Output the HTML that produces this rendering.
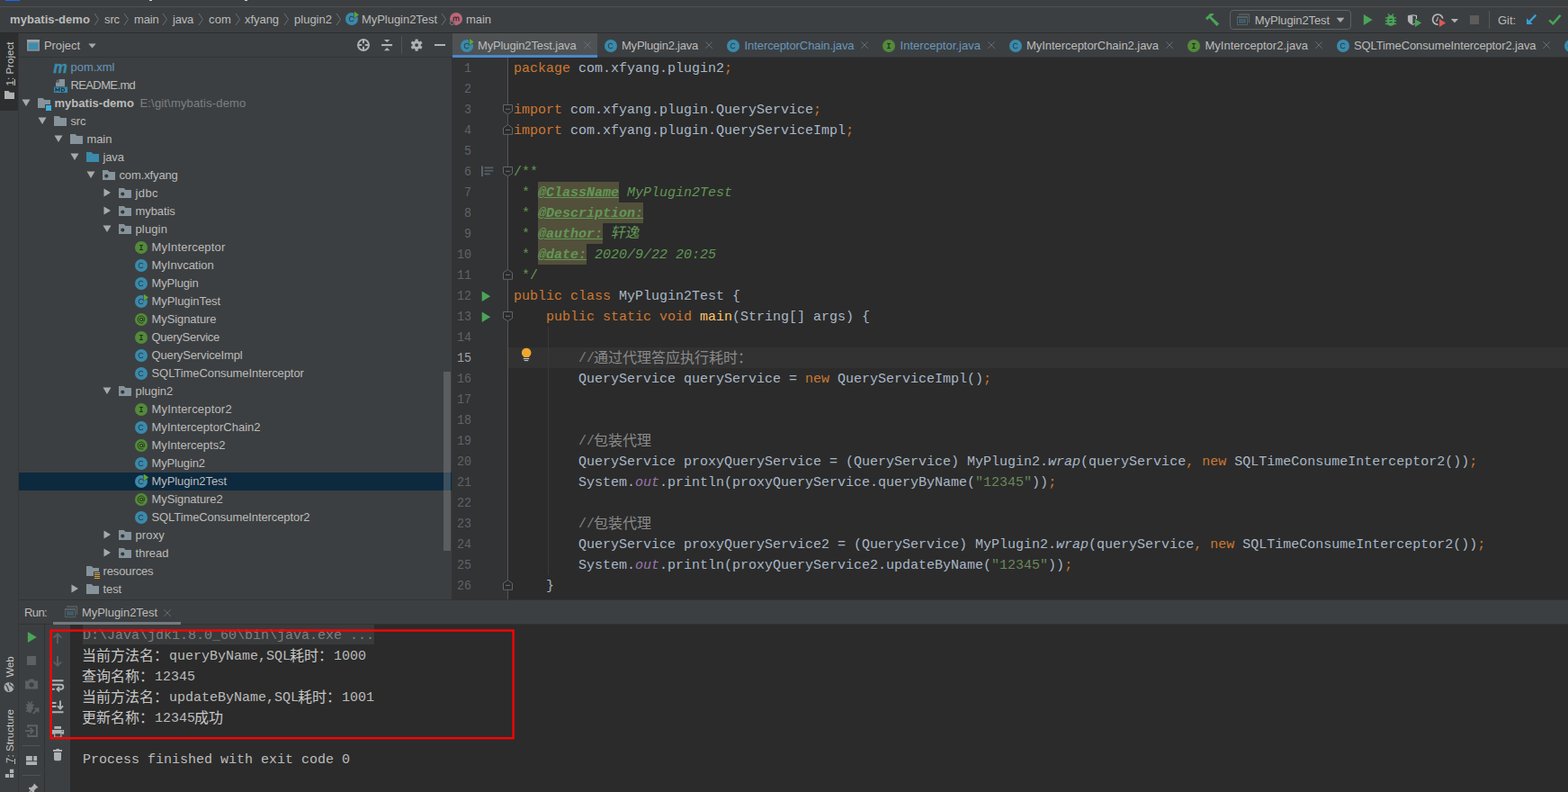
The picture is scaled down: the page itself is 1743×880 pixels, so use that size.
<!DOCTYPE html>
<html><head><meta charset="utf-8"><title>mybatis-demo</title>
<style>
html,body{margin:0;padding:0;background:#3c3f41;}
body{width:1743px;height:880px;overflow:hidden;position:relative;font-family:"Liberation Sans", sans-serif;font-size:13px;color:#bbbbbb;}
#root{position:absolute;left:0;top:0;width:1743px;height:880px;overflow:hidden;background:#3c3f41;}
#root>div,#root>span,#root>svg{position:absolute;}
.t{white-space:pre;}
.c{position:absolute;white-space:pre;font-family:"Liberation Mono", monospace;font-size:15px;line-height:23px;height:23px;color:#a9b7c6;margin-top:1px;}
.c i{font-style:italic;}
.k{color:#cc7832;} .s{color:#6a8759;} .d{color:#629755;} .g{color:#808080;} .p{color:#9876aa;font-style:italic;} .m{color:#ffc66d;}
.tag{color:#629755;font-weight:bold;font-style:italic;text-decoration:underline;background:#52503a;}
.cj{font-family:"Liberation Mono", "Noto Sans CJK SC", monospace;font-size:16px;}
</style></head>
<body><div id="root">
<svg width="0" height="0" style="position:absolute"><defs>

<symbol id="folder" viewBox="0 0 16 16"><path fill="#87939a" d="M1 2H6.6L8.6 4H15V13H1Z"/></symbol>
<symbol id="srcfolder" viewBox="0 0 16 16"><path fill="#3b8aab" d="M1 2H6.6L8.6 4H15V13H1Z"/></symbol>
<symbol id="pkg" viewBox="0 0 16 16"><path fill="#87939a" d="M1 2H6.6L8.6 4H15V13H1Z"/><circle cx="5.300" cy="8.600" r="2.100" fill="#33383b"/></symbol>
<symbol id="module" viewBox="0 0 16 16"><path fill="#87939a" d="M1 2H6.6L8.6 4H15V9H9V13H1Z"/><rect x="10" y="10" width="6" height="6" fill="#3cb0e0"/></symbol>
<symbol id="resfolder" viewBox="0 0 16 16"><path fill="#87939a" d="M1 2H6.6L8.6 4H15V8H9V13H1Z"/><path stroke="#d9a343" stroke-width="1" d="M10 9.500h6M10 11.500h6M10 13.500h6M10 15.500h6"/></symbol>
<symbol id="cls" viewBox="0 0 16 16"><circle cx="8" cy="8" r="7" fill="#3b8aab"/><path d="M10 6.500A2.600 2.700 0 1 0 10 9.500" fill="none" stroke="#294553" stroke-width="1.050"/></symbol>
<symbol id="clsrun" viewBox="0 0 16 16"><circle cx="8" cy="8" r="7" fill="#3b8aab"/><path d="M10 6.500A2.600 2.700 0 1 0 10 9.500" fill="none" stroke="#294553" stroke-width="1.050"/><path d="M10.300 -1V8.100L17 3.500Z" fill="#3c3f41"/><path d="M10.900 -0.200V7.200L16.100 3.500Z" fill="#5aa83a"/></symbol>
<symbol id="iface" viewBox="0 0 16 16"><circle cx="8" cy="8" r="7" fill="#538a3b"/><path d="M6.1 5.500h3.800M8 5.500v5M6.1 10.500h3.800" fill="none" stroke="#1f2d17" stroke-width="1.100"/></symbol>
<symbol id="anno" viewBox="0 0 16 16"><circle cx="8" cy="8" r="7" fill="#538a3b"/><circle cx="8" cy="8" r="1.700" fill="none" stroke="#233319" stroke-width="0.900"/><path d="M9.8 6.2V9.2Q10.2 10.3 11.2 9.6Q12.3 7.6 11.2 5.6Q9.6 3.6 7 4.1Q4.2 5 4.1 8Q4.2 11 7 11.9Q8.8 12.3 10.3 11.5" fill="none" stroke="#233319" stroke-width="0.850"/></symbol>
<symbol id="mvn" viewBox="0 0 16 16"><text x="0.200" y="14.200" font-family="Liberation Sans" font-weight="bold" font-style="italic" font-size="17.500" fill="#3b8aab" stroke="#3b8aab" stroke-width="0.350">m</text></symbol>
<symbol id="md" viewBox="0 -0.900 16 16"><path fill="#87939a" d="M6 0H13V8H3V3Z"/><path fill="#3c3f41" d="M6.6 0V3.6H3V2.6H5.6V0Z"/><rect x="1" y="8.6" width="15" height="6.6" fill="#3b8aab"/><path fill="none" stroke="#1f3440" stroke-width="1.1" d="M3 14V10.2L5 12.6L7 10.2V14M9.4 10.2V13.8H10.6Q12.6 13.8 12.6 12T10.6 10.2Z"/></symbol>
<symbol id="ad" viewBox="0 0 10 10"><path fill="#a7a9ab" d="M0.5 1.5H9.5L5 9Z"/></symbol>
<symbol id="ar" viewBox="0 0 10 10"><path fill="#a7a9ab" d="M1.5 0.5V9.5L9 5Z"/></symbol>
<symbol id="x" viewBox="0 0 8 8"><path stroke="#6c7073" stroke-width="0.950" d="M0.300 0.300L7.900 7.900M7.900 0.300L0.300 7.900"/></symbol>
<symbol id="runcfg" viewBox="0 0 16 16"><path d="M3 2H15M14.500 2V11" fill="none" stroke="#596064" stroke-width="1.300"/><rect x="1" y="4" width="12" height="10" fill="#596064"/><rect x="2" y="6.200" width="10" height="6.800" fill="#373a3c"/><rect x="3" y="7" width="8" height="5" fill="#3d5c69"/></symbol>

</defs></svg>
<div style="left:0px;top:0px;width:1743px;height:7px;background:#3c3f41;"></div>
<div style="left:6px;top:0px;width:16px;height:1px;background:#0f6df5;"></div>
<div style="left:166px;top:0px;width:3px;height:1px;background:#d0d0d0;"></div>
<div style="left:272px;top:0px;width:3px;height:1px;background:#d0d0d0;"></div>
<div style="left:0px;top:7px;width:1743px;height:1px;background:#515151;"></div>
<div style="left:0px;top:8px;width:1743px;height:28px;background:#3c3f41;"></div>
<div style="left:0px;top:36px;width:1743px;height:1px;background:#2b2b2b;"></div>
<span id="t1" class="t" style="left:11px;top:12.0px;line-height:20px;font-size:13px;color:#bbbbbb;font-weight:bold;letter-spacing:0.072px;">mybatis-demo</span>
<svg style="left:104px;top:14px;" width="7" height="15" viewBox="0 0 7 15"><path d="M1 1L5.500 7.500L1 14" fill="none" stroke="#6c7073" stroke-width="1"/></svg>
<span id="t2" class="t" style="left:116px;top:12.0px;line-height:20px;font-size:13px;color:#bbbbbb;letter-spacing:-0.115px;">src</span>
<svg style="left:137px;top:14px;" width="7" height="15" viewBox="0 0 7 15"><path d="M1 1L5.500 7.500L1 14" fill="none" stroke="#6c7073" stroke-width="1"/></svg>
<span id="t3" class="t" style="left:149px;top:12.0px;line-height:20px;font-size:13px;color:#bbbbbb;letter-spacing:-0.172px;">main</span>
<svg style="left:180px;top:14px;" width="7" height="15" viewBox="0 0 7 15"><path d="M1 1L5.500 7.500L1 14" fill="none" stroke="#6c7073" stroke-width="1"/></svg>
<span id="t4" class="t" style="left:192px;top:12.0px;line-height:20px;font-size:13px;color:#bbbbbb;letter-spacing:-0.215px;">java</span>
<svg style="left:220px;top:14px;" width="7" height="15" viewBox="0 0 7 15"><path d="M1 1L5.500 7.500L1 14" fill="none" stroke="#6c7073" stroke-width="1"/></svg>
<span id="t5" class="t" style="left:232px;top:12.0px;line-height:20px;font-size:13px;color:#bbbbbb;letter-spacing:0.146px;">com</span>
<svg style="left:261px;top:14px;" width="7" height="15" viewBox="0 0 7 15"><path d="M1 1L5.500 7.500L1 14" fill="none" stroke="#6c7073" stroke-width="1"/></svg>
<span id="t6" class="t" style="left:272px;top:12.0px;line-height:20px;font-size:13px;color:#bbbbbb;letter-spacing:-0.052px;">xfyang</span>
<svg style="left:315px;top:14px;" width="7" height="15" viewBox="0 0 7 15"><path d="M1 1L5.500 7.500L1 14" fill="none" stroke="#6c7073" stroke-width="1"/></svg>
<span id="t7" class="t" style="left:327px;top:12.0px;line-height:20px;font-size:13px;color:#bbbbbb;letter-spacing:0.009px;">plugin2</span>
<svg style="left:373px;top:14px;" width="7" height="15" viewBox="0 0 7 15"><path d="M1 1L5.500 7.500L1 14" fill="none" stroke="#6c7073" stroke-width="1"/></svg>
<svg style="left:383px;top:13px" width="16" height="16"><use href="#clsrun"/></svg>
<span id="t8" class="t" style="left:402px;top:12.0px;line-height:20px;font-size:13px;color:#bbbbbb;letter-spacing:-0.042px;">MyPlugin2Test</span>
<svg style="left:490px;top:14px;" width="7" height="15" viewBox="0 0 7 15"><path d="M1 1L5.500 7.500L1 14" fill="none" stroke="#6c7073" stroke-width="1"/></svg>
<svg style="left:498px;top:13px;" width="18" height="17" viewBox="0 0 18 17"><circle cx="9" cy="7.900" r="7" fill="#b76a7a"/><path d="M6.300 10.400V5.900M6.300 7Q7.200 5.700 8.300 6.100Q9.100 6.400 9.100 7.500V10.400M9.100 7.100Q10 5.700 11.200 6.100Q12 6.400 12 7.500V10.400" fill="none" stroke="#3e2229" stroke-width="1.100"/><path d="M1.400 12.700L4.400 9.700L7.400 12.700L4.400 15.700Z" fill="#3c3f41" stroke="#3c3f41" stroke-width="0.600"/><path d="M2 12.700L4.400 10.300L6.800 12.700L4.400 15.100Z" fill="#3c3f41" stroke="#878d93" stroke-width="0.950"/></svg>
<span id="t9" class="t" style="left:518px;top:12.0px;line-height:20px;font-size:13px;color:#bbbbbb;letter-spacing:-0.047px;">main</span>
<svg style="left:1336px;top:8px" width="407" height="28" viewBox="1336 8 407 28"><path fill="#4aa457" d="M1339.850 20.300L1345.200 15H1349.100L1349.300 15.900L1346.400 18.400L1355.200 26.500L1352.600 28.900L1344.300 20L1342.300 22.200Z"/><rect x="1367.500" y="11.500" width="134" height="21" rx="3.500" fill="none" stroke="#5f6263" stroke-width="1"/><path d="M1377 16H1389M1388.500 16V25" fill="none" stroke="#596064" stroke-width="1.300"/><rect x="1375" y="18" width="12" height="10" fill="#596064"/><rect x="1376" y="20.200" width="10" height="6.800" fill="#373a3c"/><rect x="1377" y="21" width="8" height="5" fill="#3d5c69"/><path d="M1485.600 19.800H1494.400L1490 24.900Z" fill="#a9abad"/><path d="M1515.800 16L1525.700 21.950L1515.800 28.100Z" fill="#4aa457"/><g fill="#4aa457" stroke="none"><path d="M1542 21.500Q1542 17 1546 17T1550 21.500V24.500Q1550 28.800 1546 28.800T1542 24.500Z"/></g><path d="M1543.100 15.300L1544.800 17.800M1548.900 15.300L1547.200 17.800M1539.900 19.900H1552.100M1539.900 23.200H1552.100M1539.900 26.500H1552.100" stroke="#4aa457" stroke-width="1.400" fill="none"/><rect x="1544.300" y="20.900" width="3.400" height="1.200" fill="#3c3f41"/><rect x="1544.300" y="24" width="3.400" height="1.200" fill="#3c3f41"/><path d="M1564.900 17.200L1570.400 16.300V27.900Q1565.500 26 1564.900 22.500Z" fill="#b1b3b5"/><path d="M1570.400 16.800L1574.500 17.500V21M1570.400 27.400Q1572 26.800 1572.600 26" fill="none" stroke="#c4c6c8" stroke-width="1.100"/><path d="M1572.900 21L1580.100 25.400L1572.900 30Z" fill="#4aa457"/><path d="M1598.700 27.200A5.600 5.600 0 1 1 1603.700 20.600" fill="none" stroke="#b4b6b8" stroke-width="1.700"/><path d="M1598.400 18.800Q1598.300 21.800 1596.500 23.800" fill="none" stroke="#b4b6b8" stroke-width="1.100"/><path d="M1600 21L1607.100 25.400L1600 30Z" fill="#db5858"/><path d="M1612.800 21H1621.100L1617 25.200Z" fill="#b0b2b4"/><rect x="1634" y="17.100" width="10.100" height="9.900" fill="#5c5c5c"/><rect x="1655.100" y="12" width="1" height="19.800" fill="#595959"/><path d="M1697 20.300V27H1703.850Z" fill="#389fd6"/><path d="M1707.300 16.650L1700 24.200" stroke="#389fd6" stroke-width="2.300" fill="none"/><path d="M1722.200 22.400L1726.350 26.300L1734.600 16.900" stroke="#49a558" stroke-width="2.500" fill="none"/></svg>
<span id="t10" class="t" style="left:1394.8px;top:13.0px;line-height:20px;font-size:13px;color:#bbbbbb;letter-spacing:-0.104px;">MyPlugin2Test</span>
<span id="t11" class="t" style="left:1665px;top:13.0px;line-height:20px;font-size:13px;color:#bbbbbb;letter-spacing:-0.009px;">Git:</span>
<div style="left:0px;top:37px;width:21px;height:843px;background:#3c3f41;"></div>
<div style="left:0px;top:37px;width:21px;height:86px;background:#2c2e2f;"></div>
<div style="left:20px;top:37px;width:1px;height:843px;background:#343637;"></div>
<span id="t12" class="t" style="left:10.8px;top:70.5px;font-size:11.500px;line-height:14px;color:#c6c6c6;transform:translate(-50%,-50%) rotate(-90deg);letter-spacing:0.042px;">1: Project</span>
<div style="left:16.1px;top:88px;width:1px;height:7px;background:#b8b8b8;"></div>
<svg style="left:5px;top:100px;" width="12" height="11" viewBox="0 0 12 11"><path fill="#afb1b3" d="M0 1H4.500L6 2.800H11V10H0Z"/></svg>
<span id="t13" class="t" style="left:10.8px;top:741px;font-size:11.500px;line-height:14px;color:#c6c6c6;transform:translate(-50%,-50%) rotate(-90deg);letter-spacing:-0.151px;">Web</span>
<svg style="left:3px;top:757px;" width="14" height="14" viewBox="0 0 14 14"><circle cx="7" cy="6.500" r="5.500" fill="#a8abad"/><path d="M3 4Q5 5 5.500 7T7 11M8 1.500Q7 4 9.500 5T12 8" stroke="#3c3f41" stroke-width="1.300" fill="none"/></svg>
<span id="t14" class="t" style="left:10.8px;top:818px;font-size:11.500px;line-height:14px;color:#c6c6c6;transform:translate(-50%,-50%) rotate(-90deg);letter-spacing:0.046px;">7: Structure</span>
<div style="left:16.1px;top:842.5px;width:1px;height:6.5px;background:#b8b8b8;"></div>
<svg style="left:4px;top:853px;" width="13" height="13" viewBox="0 0 13 13"><path fill="#afb1b3" d="M6.900 1.800H11.200V6.100H6.900ZM1.900 7H6V11.100H1.900ZM6.900 7H11.200V11.100H6.900Z"/></svg>
<div style="left:21px;top:37px;width:481px;height:27px;background:#3c3f41;"></div>
<svg style="left:29px;top:43px;" width="16" height="16" viewBox="0 0 16 16"><rect x="1" y="1.100" width="14" height="12.600" fill="#879096"/><rect x="1" y="1.100" width="14" height="2.400" fill="#9ea7ad"/><rect x="2.800" y="4.600" width="10.500" height="7.300" fill="#3a8db0"/></svg>
<span id="t15" class="t" style="left:49px;top:40.5px;line-height:20px;font-size:13px;color:#bbbbbb;letter-spacing:-0.067px;">Project</span>
<svg style="left:97.5px;top:48px;" width="9" height="6" viewBox="0 0 9 6"><path d="M0.300 0.500H8.700L4.500 5.500Z" fill="#a4a7a9"/></svg>
<svg style="left:396px;top:42px;" width="16" height="16" viewBox="0 0 16 16"><circle cx="8" cy="8" r="6" fill="none" stroke="#afb1b3" stroke-width="1.900"/><path d="M8 1.500V6.200M8 9.800V14.500M1.500 8H6.200M9.800 8H14.500" stroke="#afb1b3" stroke-width="2"/></svg>
<svg style="left:423px;top:42px;" width="15" height="16" viewBox="0 0 15 16"><rect x="1.100" y="7" width="12" height="2.100" fill="#afb1b3"/><path d="M3.900 2.100H10.400L7.150 5ZM3.900 14.300H10.400L7.150 11Z" fill="#afb1b3"/></svg>
<div style="left:446px;top:40px;width:1px;height:20px;background:#515456;"></div>
<svg style="left:455px;top:42px;" width="16" height="16" viewBox="0 0 16 16"><g fill="#afb1b3"><circle cx="8.100" cy="8.100" r="4.800"/><rect x="6.500" y="1.500" width="3.200" height="3.400" rx=".6" transform="rotate(0 8.100 8.100)"/><rect x="6.500" y="1.500" width="3.200" height="3.400" rx=".6" transform="rotate(60 8.100 8.100)"/><rect x="6.500" y="1.500" width="3.200" height="3.400" rx=".6" transform="rotate(120 8.100 8.100)"/><rect x="6.500" y="1.500" width="3.200" height="3.400" rx=".6" transform="rotate(180 8.100 8.100)"/><rect x="6.500" y="1.500" width="3.200" height="3.400" rx=".6" transform="rotate(240 8.100 8.100)"/><rect x="6.500" y="1.500" width="3.200" height="3.400" rx=".6" transform="rotate(300 8.100 8.100)"/></g><circle cx="8.100" cy="8.100" r="1.900" fill="#3c3f41"/></svg>
<div style="left:483px;top:49px;width:12.3px;height:2.1px;background:#afb1b3;"></div>
<div style="left:21px;top:63px;width:1722px;height:1px;background:#323435;"></div>
<div style="left:21px;top:64px;width:481px;height:602px;background:#3c3f41;"></div>
<svg style="left:59px;top:67px" width="16" height="16"><use href="#mvn"/></svg>
<span id="t16" class="t" style="left:78.5px;top:65.0px;line-height:20px;font-size:13px;color:#6897bb;letter-spacing:-0.018px;">pom.xml</span>
<svg style="left:59px;top:87px" width="16" height="16"><use href="#md"/></svg>
<span id="t17" class="t" style="left:78.5px;top:85.0px;line-height:20px;font-size:13px;color:#bbbbbb;letter-spacing:-0.622px;">README.md</span>
<svg style="left:24px;top:109px" width="10" height="10"><use href="#ad"/></svg>
<svg style="left:41px;top:107px" width="16" height="16"><use href="#module"/></svg>
<span id="t18" class="t" style="left:60.5px;top:105.0px;line-height:20px;font-size:13px;color:#bbbbbb;font-weight:bold;letter-spacing:0.022px;">mybatis-demo</span>
<span id="t19" class="t" style="left:155.5px;top:105.0px;line-height:20px;font-size:13px;color:#7d8082;letter-spacing:0.164px;">E:\git\mybatis-demo</span>
<svg style="left:42px;top:129px" width="10" height="10"><use href="#ad"/></svg>
<svg style="left:59px;top:127px" width="16" height="16"><use href="#folder"/></svg>
<span id="t20" class="t" style="left:78.5px;top:125.0px;line-height:20px;font-size:13px;color:#bbbbbb;letter-spacing:-0.215px;">src</span>
<svg style="left:60px;top:149px" width="10" height="10"><use href="#ad"/></svg>
<svg style="left:77px;top:147px" width="16" height="16"><use href="#folder"/></svg>
<span id="t21" class="t" style="left:96.5px;top:145.0px;line-height:20px;font-size:13px;color:#bbbbbb;letter-spacing:-0.097px;">main</span>
<svg style="left:78px;top:169px" width="10" height="10"><use href="#ad"/></svg>
<svg style="left:95px;top:167px" width="16" height="16"><use href="#srcfolder"/></svg>
<span id="t22" class="t" style="left:114.5px;top:165.0px;line-height:20px;font-size:13px;color:#bbbbbb;letter-spacing:-0.140px;">java</span>
<svg style="left:96px;top:189px" width="10" height="10"><use href="#ad"/></svg>
<svg style="left:113px;top:187px" width="16" height="16"><use href="#pkg"/></svg>
<span id="t23" class="t" style="left:132.5px;top:185.0px;line-height:20px;font-size:13px;color:#bbbbbb;letter-spacing:-0.128px;">com.xfyang</span>
<svg style="left:114px;top:209px" width="10" height="10"><use href="#ar"/></svg>
<svg style="left:131px;top:207px" width="16" height="16"><use href="#pkg"/></svg>
<span id="t24" class="t" style="left:150.5px;top:205.0px;line-height:20px;font-size:13px;color:#bbbbbb;letter-spacing:0.385px;">jdbc</span>
<svg style="left:114px;top:229px" width="10" height="10"><use href="#ar"/></svg>
<svg style="left:131px;top:227px" width="16" height="16"><use href="#pkg"/></svg>
<span id="t25" class="t" style="left:150.5px;top:225.0px;line-height:20px;font-size:13px;color:#bbbbbb;letter-spacing:-0.100px;">mybatis</span>
<svg style="left:114px;top:249px" width="10" height="10"><use href="#ad"/></svg>
<svg style="left:131px;top:247px" width="16" height="16"><use href="#pkg"/></svg>
<span id="t26" class="t" style="left:150.5px;top:245.0px;line-height:20px;font-size:13px;color:#bbbbbb;letter-spacing:0.133px;">plugin</span>
<svg style="left:149px;top:267px" width="16" height="16"><use href="#iface"/></svg>
<span id="t27" class="t" style="left:168.5px;top:265.0px;line-height:20px;font-size:13px;color:#bbbbbb;letter-spacing:0.194px;">MyInterceptor</span>
<svg style="left:149px;top:287px" width="16" height="16"><use href="#cls"/></svg>
<span id="t28" class="t" style="left:168.5px;top:285.0px;line-height:20px;font-size:13px;color:#bbbbbb;letter-spacing:-0.007px;">MyInvcation</span>
<svg style="left:149px;top:307px" width="16" height="16"><use href="#cls"/></svg>
<span id="t29" class="t" style="left:168.5px;top:305.0px;line-height:20px;font-size:13px;color:#bbbbbb;letter-spacing:-0.184px;">MyPlugin</span>
<svg style="left:149px;top:327px" width="16" height="16"><use href="#clsrun"/></svg>
<span id="t30" class="t" style="left:168.5px;top:325.0px;line-height:20px;font-size:13px;color:#bbbbbb;letter-spacing:-0.059px;">MyPluginTest</span>
<svg style="left:149px;top:347px" width="16" height="16"><use href="#anno"/></svg>
<span id="t31" class="t" style="left:168.5px;top:345.0px;line-height:20px;font-size:13px;color:#bbbbbb;letter-spacing:-0.089px;">MySignature</span>
<svg style="left:149px;top:367px" width="16" height="16"><use href="#iface"/></svg>
<span id="t32" class="t" style="left:168.5px;top:365.0px;line-height:20px;font-size:13px;color:#bbbbbb;letter-spacing:-0.271px;">QueryService</span>
<svg style="left:149px;top:387px" width="16" height="16"><use href="#cls"/></svg>
<span id="t33" class="t" style="left:168.5px;top:385.0px;line-height:20px;font-size:13px;color:#bbbbbb;letter-spacing:-0.138px;">QueryServiceImpl</span>
<svg style="left:149px;top:407px" width="16" height="16"><use href="#cls"/></svg>
<span id="t34" class="t" style="left:168.5px;top:405.0px;line-height:20px;font-size:13px;color:#bbbbbb;letter-spacing:-0.077px;">SQLTimeConsumeInterceptor</span>
<svg style="left:114px;top:429px" width="10" height="10"><use href="#ad"/></svg>
<svg style="left:131px;top:427px" width="16" height="16"><use href="#pkg"/></svg>
<span id="t35" class="t" style="left:150.5px;top:425.0px;line-height:20px;font-size:13px;color:#bbbbbb;letter-spacing:-0.020px;">plugin2</span>
<svg style="left:149px;top:447px" width="16" height="16"><use href="#iface"/></svg>
<span id="t36" class="t" style="left:168.5px;top:445.0px;line-height:20px;font-size:13px;color:#bbbbbb;letter-spacing:0.185px;">MyInterceptor2</span>
<svg style="left:149px;top:467px" width="16" height="16"><use href="#cls"/></svg>
<span id="t37" class="t" style="left:168.5px;top:465.0px;line-height:20px;font-size:13px;color:#bbbbbb;letter-spacing:0.023px;">MyInterceptorChain2</span>
<svg style="left:149px;top:487px" width="16" height="16"><use href="#anno"/></svg>
<span id="t38" class="t" style="left:168.5px;top:485.0px;line-height:20px;font-size:13px;color:#bbbbbb;letter-spacing:0.026px;">MyIntercepts2</span>
<svg style="left:149px;top:507px" width="16" height="16"><use href="#cls"/></svg>
<span id="t39" class="t" style="left:168.5px;top:505.0px;line-height:20px;font-size:13px;color:#bbbbbb;letter-spacing:-0.156px;">MyPlugin2</span>
<div style="left:21px;top:525px;width:481px;height:20px;background:#0d293e;"></div>
<svg style="left:149px;top:527px" width="16" height="16"><use href="#clsrun"/></svg>
<span id="t40" class="t" style="left:168.5px;top:525.0px;line-height:20px;font-size:13px;color:#bbbbbb;letter-spacing:-0.081px;">MyPlugin2Test</span>
<svg style="left:149px;top:547px" width="16" height="16"><use href="#anno"/></svg>
<span id="t41" class="t" style="left:168.5px;top:545.0px;line-height:20px;font-size:13px;color:#bbbbbb;letter-spacing:-0.093px;">MySignature2</span>
<svg style="left:149px;top:567px" width="16" height="16"><use href="#cls"/></svg>
<span id="t42" class="t" style="left:168.5px;top:565.0px;line-height:20px;font-size:13px;color:#bbbbbb;letter-spacing:-0.095px;">SQLTimeConsumeInterceptor2</span>
<svg style="left:114px;top:589px" width="10" height="10"><use href="#ar"/></svg>
<svg style="left:131px;top:587px" width="16" height="16"><use href="#pkg"/></svg>
<span id="t43" class="t" style="left:150.5px;top:585.0px;line-height:20px;font-size:13px;color:#bbbbbb;letter-spacing:0.141px;">proxy</span>
<svg style="left:114px;top:609px" width="10" height="10"><use href="#ar"/></svg>
<svg style="left:131px;top:607px" width="16" height="16"><use href="#pkg"/></svg>
<span id="t44" class="t" style="left:150.5px;top:605.0px;line-height:20px;font-size:13px;color:#bbbbbb;letter-spacing:0.021px;">thread</span>
<svg style="left:95px;top:627px" width="16" height="16"><use href="#resfolder"/></svg>
<span id="t45" class="t" style="left:114.5px;top:625.0px;line-height:20px;font-size:13px;color:#bbbbbb;letter-spacing:-0.120px;">resources</span>
<svg style="left:78px;top:649px" width="10" height="10"><use href="#ar"/></svg>
<svg style="left:95px;top:647px" width="16" height="16"><use href="#folder"/></svg>
<span id="t46" class="t" style="left:114.5px;top:645.0px;line-height:20px;font-size:13px;color:#bbbbbb;letter-spacing:-0.092px;">test</span>
<div style="left:493px;top:413px;width:8px;height:199px;background:rgba(148,150,152,0.360);"></div>
<div style="left:21px;top:666px;width:1722px;height:1px;background:#323232;"></div>
<div style="left:502px;top:37px;width:1241px;height:27px;background:#3c3f41;"></div>
<div style="left:502px;top:63px;width:1241px;height:1px;background:#323435;"></div>
<div style="left:503px;top:37px;width:161px;height:27px;background:#4e5254;"></div>
<div style="left:503px;top:61px;width:161px;height:3px;background:#4a88c7;"></div>
<svg style="left:511px;top:43px" width="16" height="16"><use href="#clsrun"/></svg>
<span id="t47" class="t" style="left:531px;top:40.5px;line-height:20px;font-size:13px;color:#bbbbbb;letter-spacing:-0.139px;">MyPlugin2Test.java</span>
<svg style="left:649px;top:46px" width="8" height="8"><use href="#x"/></svg>
<svg style="left:671px;top:43px" width="16" height="16"><use href="#cls"/></svg>
<span id="t48" class="t" style="left:691px;top:40.5px;line-height:20px;font-size:13px;color:#bbbbbb;letter-spacing:-0.225px;">MyPlugin2.java</span>
<svg style="left:784px;top:46px" width="8" height="8"><use href="#x"/></svg>
<svg style="left:807px;top:43px" width="16" height="16"><use href="#cls"/></svg>
<span id="t49" class="t" style="left:827.5px;top:40.5px;line-height:20px;font-size:13px;color:#6897bb;letter-spacing:-0.075px;">InterceptorChain.java</span>
<svg style="left:957px;top:46px" width="8" height="8"><use href="#x"/></svg>
<svg style="left:980px;top:43px" width="16" height="16"><use href="#iface"/></svg>
<span id="t50" class="t" style="left:1000.5px;top:40.5px;line-height:20px;font-size:13px;color:#6897bb;letter-spacing:0.038px;">Interceptor.java</span>
<svg style="left:1098px;top:46px" width="8" height="8"><use href="#x"/></svg>
<svg style="left:1121px;top:43px" width="16" height="16"><use href="#cls"/></svg>
<span id="t51" class="t" style="left:1141px;top:40.5px;line-height:20px;font-size:13px;color:#bbbbbb;letter-spacing:-0.048px;">MyInterceptorChain2.java</span>
<svg style="left:1296px;top:46px" width="8" height="8"><use href="#x"/></svg>
<svg style="left:1319px;top:43px" width="16" height="16"><use href="#iface"/></svg>
<span id="t52" class="t" style="left:1339.5px;top:40.5px;line-height:20px;font-size:13px;color:#bbbbbb;letter-spacing:0.017px;">MyInterceptor2.java</span>
<svg style="left:1462px;top:46px" width="8" height="8"><use href="#x"/></svg>
<svg style="left:1485px;top:43px" width="16" height="16"><use href="#cls"/></svg>
<span id="t53" class="t" style="left:1505px;top:40.5px;line-height:20px;font-size:13px;color:#bbbbbb;letter-spacing:-0.111px;">SQLTimeConsumeInterceptor2.java</span>
<svg style="left:1715px;top:46px" width="8" height="8"><use href="#x"/></svg>
<svg style="left:1738px;top:43px" width="16" height="16"><use href="#cls"/></svg>
<div style="left:502px;top:64px;width:62px;height:602px;background:#313335;"></div>
<div style="left:564px;top:64px;width:1px;height:602px;background:#555555;"></div>
<div style="left:565px;top:64px;width:1178px;height:602px;background:#2b2b2b;"></div>
<div style="left:565px;top:386px;width:1178px;height:23px;background:#323232;"></div>
<div style="left:609px;top:363px;width:1px;height:276px;background:#393939;"></div>
<span class="c" style="left:514.8px;top:64px;color:#606366;transform:scaleX(0.890);transform-origin:100% 50%">1</span>
<span class="c" style="left:514.8px;top:87px;color:#606366;transform:scaleX(0.890);transform-origin:100% 50%">2</span>
<span class="c" style="left:514.8px;top:110px;color:#606366;transform:scaleX(0.890);transform-origin:100% 50%">3</span>
<span class="c" style="left:514.8px;top:133px;color:#606366;transform:scaleX(0.890);transform-origin:100% 50%">4</span>
<span class="c" style="left:514.8px;top:156px;color:#606366;transform:scaleX(0.890);transform-origin:100% 50%">5</span>
<span class="c" style="left:514.8px;top:179px;color:#606366;transform:scaleX(0.890);transform-origin:100% 50%">6</span>
<span class="c" style="left:514.8px;top:202px;color:#606366;transform:scaleX(0.890);transform-origin:100% 50%">7</span>
<span class="c" style="left:514.8px;top:225px;color:#606366;transform:scaleX(0.890);transform-origin:100% 50%">8</span>
<span class="c" style="left:514.8px;top:248px;color:#606366;transform:scaleX(0.890);transform-origin:100% 50%">9</span>
<span class="c" style="left:505.79999999999995px;top:271px;color:#606366;transform:scaleX(0.890);transform-origin:100% 50%">10</span>
<span class="c" style="left:505.79999999999995px;top:294px;color:#606366;transform:scaleX(0.890);transform-origin:100% 50%">11</span>
<span class="c" style="left:505.79999999999995px;top:317px;color:#606366;transform:scaleX(0.890);transform-origin:100% 50%">12</span>
<span class="c" style="left:505.79999999999995px;top:340px;color:#606366;transform:scaleX(0.890);transform-origin:100% 50%">13</span>
<span class="c" style="left:505.79999999999995px;top:363px;color:#606366;transform:scaleX(0.890);transform-origin:100% 50%">14</span>
<span class="c" style="left:505.79999999999995px;top:386px;color:#a4a3a3;transform:scaleX(0.890);transform-origin:100% 50%">15</span>
<span class="c" style="left:505.79999999999995px;top:409px;color:#606366;transform:scaleX(0.890);transform-origin:100% 50%">16</span>
<span class="c" style="left:505.79999999999995px;top:432px;color:#606366;transform:scaleX(0.890);transform-origin:100% 50%">17</span>
<span class="c" style="left:505.79999999999995px;top:455px;color:#606366;transform:scaleX(0.890);transform-origin:100% 50%">18</span>
<span class="c" style="left:505.79999999999995px;top:478px;color:#606366;transform:scaleX(0.890);transform-origin:100% 50%">19</span>
<span class="c" style="left:505.79999999999995px;top:501px;color:#606366;transform:scaleX(0.890);transform-origin:100% 50%">20</span>
<span class="c" style="left:505.79999999999995px;top:524px;color:#606366;transform:scaleX(0.890);transform-origin:100% 50%">21</span>
<span class="c" style="left:505.79999999999995px;top:547px;color:#606366;transform:scaleX(0.890);transform-origin:100% 50%">22</span>
<span class="c" style="left:505.79999999999995px;top:570px;color:#606366;transform:scaleX(0.890);transform-origin:100% 50%">23</span>
<span class="c" style="left:505.79999999999995px;top:593px;color:#606366;transform:scaleX(0.890);transform-origin:100% 50%">24</span>
<span class="c" style="left:505.79999999999995px;top:616px;color:#606366;transform:scaleX(0.890);transform-origin:100% 50%">25</span>
<span class="c" style="left:505.79999999999995px;top:639px;color:#606366;transform:scaleX(0.890);transform-origin:100% 50%">26</span>
<svg style="left:534.5px;top:322.5px;" width="12" height="13" viewBox="0 0 12 13"><path d="M0.700 0.500L10.200 6.200L0.700 11.900Z" fill="#4aa457"/></svg>
<svg style="left:534.5px;top:345.5px;" width="12" height="13" viewBox="0 0 12 13"><path d="M0.700 0.500L10.200 6.200L0.700 11.900Z" fill="#4aa457"/></svg>
<svg style="left:534px;top:184px;" width="16" height="14" viewBox="0 0 16 14"><rect x="1" y="0.400" width="1.900" height="11.600" fill="#5d646a"/><path d="M4.500 2.400H14.200M4.500 5.800H14.200M4.500 9.400H10.800" stroke="#596066" stroke-width="1.600"/></svg>
<svg style="left:559px;top:116px;" width="11" height="13" viewBox="0 0 11 13"><path d="M0.500 0.500H10.500V7.700L5.500 10.700L0.500 7.700Z" fill="#2b2b2b" stroke="#626568" stroke-width="1"/><path d="M3 5.3H8" stroke="#6e7174" stroke-width="1"/></svg>
<svg style="left:559px;top:138px;" width="11" height="13" viewBox="0 0 11 13"><path d="M0.500 11.300H10.500V4L5.500 0.600L0.500 4Z" fill="#2b2b2b" stroke="#626568" stroke-width="1"/><path d="M3 6.400H8" stroke="#6e7174" stroke-width="1"/></svg>
<svg style="left:559px;top:185px;" width="11" height="13" viewBox="0 0 11 13"><path d="M0.500 0.500H10.500V7.700L5.500 10.700L0.500 7.700Z" fill="#2b2b2b" stroke="#626568" stroke-width="1"/><path d="M3 5.3H8" stroke="#6e7174" stroke-width="1"/></svg>
<svg style="left:559px;top:299px;" width="11" height="13" viewBox="0 0 11 13"><path d="M0.500 11.300H10.500V4L5.500 0.600L0.500 4Z" fill="#2b2b2b" stroke="#626568" stroke-width="1"/><path d="M3 6.400H8" stroke="#6e7174" stroke-width="1"/></svg>
<svg style="left:559px;top:346px;" width="11" height="13" viewBox="0 0 11 13"><path d="M0.500 0.500H10.500V7.700L5.500 10.700L0.500 7.700Z" fill="#2b2b2b" stroke="#626568" stroke-width="1"/><path d="M3 5.3H8" stroke="#6e7174" stroke-width="1"/></svg>
<svg style="left:559px;top:644px;" width="11" height="13" viewBox="0 0 11 13"><path d="M0.500 11.300H10.500V4L5.500 0.600L0.500 4Z" fill="#2b2b2b" stroke="#626568" stroke-width="1"/><path d="M3 6.400H8" stroke="#6e7174" stroke-width="1"/></svg>
<svg style="left:579px;top:386px;" width="13" height="17" viewBox="0 0 13 17"><path d="M6.150 0.700a5.250 5.250 0 0 1 3.050 9.500v0.900h-6.100v-0.900a5.250 5.250 0 0 1 3.050-9.500z" fill="#f0a732"/><rect x="2.800" y="12" width="6.500" height="1.100" fill="#ced1d4"/><rect x="3.700" y="14.100" width="4.600" height="1" fill="#ced1d4"/></svg>
<span class="c" style="left:571px;top:64px"><span class="k">package</span> com.xfyang.plugin2<span class="k">;</span></span>
<span class="c" style="left:571px;top:110px"><span class="k">import</span> com.xfyang.plugin.QueryService<span class="k">;</span></span>
<span class="c" style="left:571px;top:133px"><span class="k">import</span> com.xfyang.plugin.QueryServiceImpl<span class="k">;</span></span>
<span class="c" style="left:571px;top:179px"><span class="d">/**</span></span>
<div style="left:598px;top:202px;width:90px;height:23px;background:#52503a;"></div>
<div style="left:598px;top:225px;width:117px;height:23px;background:#52503a;"></div>
<div style="left:598px;top:248px;width:72px;height:23px;background:#52503a;"></div>
<div style="left:598px;top:271px;width:54px;height:23px;background:#52503a;"></div>
<span class="c" style="left:571px;top:202px"><span class="d"> * </span><span class="tag">@ClassName</span><span class="d"><i> MyPlugin2Test</i></span></span>
<span class="c" style="left:571px;top:225px"><span class="d"> * </span><span class="tag">@Description:</span></span>
<span class="c" style="left:571px;top:248px"><span class="d"> * </span><span class="tag">@author:</span></span>
<svg style="left:679px;top:250.0px;overflow:visible" width="36" height="18.5" fill="#629755"><g transform="skewX(-12)" transform-origin="0 16.5"><text class="cj" x="-1" y="14.500" fill="#629755">轩逸</text></g></svg>
<span class="c" style="left:571px;top:271px"><span class="d"> * </span><span class="tag">@date:</span><span class="d"><i> 2020/9/22 20:25</i></span></span>
<span class="c" style="left:571px;top:294px"><span class="d"> */</span></span>
<span class="c" style="left:571px;top:317px"><span class="k">public class</span> MyPlugin2Test {</span>
<span class="c" style="left:607px;top:340px"><span class="k">public static void</span> <span class="m">main</span>(String[] args) {</span>
<span class="c" style="left:643px;top:386px"><span class="g">//</span></span>
<svg style="left:661px;top:388.0px;overflow:visible" width="180" height="18.5" fill="#8a8a8a"><text class="cj" x="-1" y="14.500" fill="#8a8a8a">通过代理答应执行耗时：</text></svg>
<span class="c" style="left:643px;top:409px">QueryService queryService = <span class="k">new</span> QueryServiceImpl()<span class="k">;</span></span>
<span class="c" style="left:643px;top:478px"><span class="g">//</span></span>
<svg style="left:661px;top:480.0px;overflow:visible" width="68" height="18.5" fill="#8a8a8a"><text class="cj" x="-1" y="14.500" fill="#8a8a8a">包装代理</text></svg>
<span class="c" style="left:643px;top:501px">QueryService proxyQueryService = (QueryService) MyPlugin2.<i>wrap</i>(queryService<span class="k">,</span> <span class="k">new</span> SQLTimeConsumeInterceptor2())<span class="k">;</span></span>
<span class="c" style="left:643px;top:524px">System.<span class="p">out</span>.println(proxyQueryService.queryByName(<span class="s">"12345"</span>))<span class="k">;</span></span>
<span class="c" style="left:643px;top:570px"><span class="g">//</span></span>
<svg style="left:661px;top:572.0px;overflow:visible" width="68" height="18.5" fill="#8a8a8a"><text class="cj" x="-1" y="14.500" fill="#8a8a8a">包装代理</text></svg>
<span class="c" style="left:643px;top:593px">QueryService proxyQueryService2 = (QueryService) MyPlugin2.<i>wrap</i>(queryService<span class="k">,</span> <span class="k">new</span> SQLTimeConsumeInterceptor2())<span class="k">;</span></span>
<span class="c" style="left:643px;top:616px">System.<span class="p">out</span>.println(proxyQueryService2.updateByName(<span class="s">"12345"</span>))<span class="k">;</span></span>
<span class="c" style="left:607px;top:639px">}</span>
<div style="left:21px;top:667px;width:1722px;height:26px;background:#3c3f41;"></div>
<span id="t54" class="t" style="left:27px;top:670.5px;line-height:20px;font-size:13px;color:#bbbbbb;letter-spacing:-0.617px;">Run:</span>
<svg style="left:71px;top:672px" width="16" height="16"><use href="#runcfg"/></svg>
<span id="t55" class="t" style="left:91px;top:670.5px;line-height:20px;font-size:13px;color:#bbbbbb;letter-spacing:-0.042px;">MyPlugin2Test</span>
<svg style="left:182px;top:677px" width="8" height="8"><use href="#x"/></svg>
<div style="left:21px;top:693px;width:1722px;height:1px;background:#323232;"></div>
<div style="left:59px;top:691px;width:142px;height:3px;background:#747a80;"></div>
<div style="left:21px;top:694px;width:29px;height:186px;background:#3c3f41;"></div>
<div style="left:49px;top:694px;width:1px;height:186px;background:#323232;"></div>
<div style="left:50px;top:694px;width:28px;height:186px;background:#3c3f41;"></div>
<div style="left:78px;top:694px;width:1665px;height:186px;background:#2b2b2b;"></div>
<svg style="left:30px;top:701px;" width="12" height="14" viewBox="0 0 12 14"><path d="M0.900 1L10.800 7L0.900 13Z" fill="#4aa457"/></svg>
<div style="left:30px;top:729px;width:10px;height:10px;background:#5e6062;"></div>
<svg style="left:27px;top:752px;" width="16" height="16" viewBox="0 0 16 16"><path d="M1 4.500H4.500L5.800 2.500H10.200L11.500 4.500H15V13.500H1Z" fill="#5e6062"/><circle cx="8" cy="8.800" r="2.600" fill="#3c3f41"/></svg>
<svg style="left:26px;top:776px" width="22" height="78" viewBox="26 776 22 78"><ellipse cx="33.400" cy="786.600" rx="3.500" ry="5.300" fill="#5e6062"/><path d="M30.800 779.400L32.800 781.800M36 779.400L34 781.800M28.800 783.200H31M28.600 786.600H31M28.800 790H31M36 783.200H38" stroke="#5e6062" stroke-width="1.500" fill="none"/><path d="M35.200 795L44.500 785.700L40 784.500L35 789.500Z" fill="#3c3f41"/><path d="M36.800 793L42.200 787.600M38.400 787.300H42.500V791.400" stroke="#5e6062" stroke-width="1.800" fill="none"/><path d="M31.200 808.600V806.300H41V817.900H31.200V815.600" fill="none" stroke="#5e6062" stroke-width="2"/><path d="M28 812.100H36.800M33.600 808.900L36.800 812.100L33.600 815.300" fill="none" stroke="#5e6062" stroke-width="1.900"/><path d="M29 840H35.800V845.200H29ZM37.300 840H41.100V845.200H37.300ZM29 846.300H41.100V850H29Z" fill="#afb1b3"/></svg>
<div style="left:25px;top:828px;width:20px;height:1px;background:#515355;"></div>
<div style="left:25px;top:861px;width:20px;height:1px;background:#515355;"></div>
<svg style="left:29.5px;top:869.2px;" width="14" height="14" viewBox="0 0 14 14"><path d="M8 1.500L12.500 6L10.500 6.800L8 9.300L8.300 11.800L6.800 12L2 7.200L2.200 5.700L4.700 6L7.200 3.500Z" fill="#afb1b3"/><path d="M1 13L4.500 9.500" stroke="#afb1b3" stroke-width="1.300"/></svg>
<svg style="left:58px;top:702px;" width="12" height="14" viewBox="0 0 12 14"><path d="M6 13V2.300M1.700 6.600L6 2.300L10.300 6.600" fill="none" stroke="#5b5e60" stroke-width="2"/></svg>
<svg style="left:58px;top:728px;" width="12" height="14" viewBox="0 0 12 14"><path d="M6 1V11.700M1.700 7.400L6 11.700L10.300 7.400" fill="none" stroke="#5b5e60" stroke-width="2"/></svg>
<svg style="left:57px;top:753px;" width="15" height="16" viewBox="0 0 15 16"><path d="M1 3.200H13.500M1 7.800H10.500Q13.300 7.800 13.300 10.300T10.500 12.800H7M1 12.800H3.800M9 10.200L6.400 12.800L9 15.400" fill="none" stroke="#afb1b3" stroke-width="1.900"/></svg>
<svg style="left:57px;top:777px;" width="15" height="16" viewBox="0 0 15 16"><path d="M1 4H5.500M1 8H5.500M1 14.200H13.500M10 1.500V10.500M7 7.300L10 10.500L13 7.300" fill="none" stroke="#afb1b3" stroke-width="1.900"/></svg>
<svg style="left:56px;top:804px" width="18" height="44" viewBox="56 804 18 44"><rect x="60.300" y="807" width="7.700" height="2.900" fill="#afb1b3"/><path d="M57.600 810.900H71.100V815.800H68.600V814H60.100V815.800H57.600Z" fill="#afb1b3"/><rect x="60.700" y="814.600" width="7.200" height="4.600" fill="none" stroke="#afb1b3" stroke-width="1.200"/><rect x="68.600" y="811.800" width="1.200" height="1.200" fill="#3c3f41"/><path d="M62.400 831.900H66V833H69V835H59V833H62.400ZM60 836H68V843.400Q68 845.200 66.200 845.200H61.800Q60 845.200 60 843.400Z" fill="#afb1b3"/></svg>
<div style="left:92px;top:694px;width:324px;height:22px;background:#393a3b;"></div>
<span class="c" style="left:92px;top:694px;color:#7f8183">D:\Java\jdk1.8.0_60\bin\java.exe ...</span>
<svg style="left:92px;top:719.0px;overflow:visible" width="100" height="18.5" fill="#c6c6c6"><text class="cj" x="-1" y="14.500" fill="#c6c6c6">当前方法名：</text></svg>
<span class="c" style="left:188px;top:717px;color:#bbbbbb">queryByName,SQL</span>
<svg style="left:323px;top:719.0px;overflow:visible" width="52" height="18.5" fill="#c6c6c6"><text class="cj" x="-1" y="14.500" fill="#c6c6c6">耗时：</text></svg>
<span class="c" style="left:371px;top:717px;color:#bbbbbb">1000</span>
<svg style="left:92px;top:742.0px;overflow:visible" width="84" height="18.5" fill="#c6c6c6"><text class="cj" x="-1" y="14.500" fill="#c6c6c6">查询名称：</text></svg>
<span class="c" style="left:172px;top:740px;color:#bbbbbb">12345</span>
<svg style="left:92px;top:765.0px;overflow:visible" width="100" height="18.5" fill="#c6c6c6"><text class="cj" x="-1" y="14.500" fill="#c6c6c6">当前方法名：</text></svg>
<span class="c" style="left:188px;top:763px;color:#bbbbbb">updateByName,SQL</span>
<svg style="left:332px;top:765.0px;overflow:visible" width="52" height="18.5" fill="#c6c6c6"><text class="cj" x="-1" y="14.500" fill="#c6c6c6">耗时：</text></svg>
<span class="c" style="left:380px;top:763px;color:#bbbbbb">1001</span>
<svg style="left:92px;top:788.0px;overflow:visible" width="84" height="18.5" fill="#c6c6c6"><text class="cj" x="-1" y="14.500" fill="#c6c6c6">更新名称：</text></svg>
<span class="c" style="left:172px;top:786px;color:#bbbbbb">12345</span>
<svg style="left:217px;top:788.0px;overflow:visible" width="36" height="18.5" fill="#c6c6c6"><text class="cj" x="-1" y="14.500" fill="#c6c6c6">成功</text></svg>
<span class="c" style="left:92px;top:832px;color:#bbbbbb">Process finished with exit code 0</span>
<svg style="left:54px;top:698px;" width="520" height="125" viewBox="0 0 520 125"><rect x="2.550" y="2.550" width="514.100" height="119.600" fill="none" stroke="#fc0303" stroke-width="2.400"/></svg>
</div></body></html>
